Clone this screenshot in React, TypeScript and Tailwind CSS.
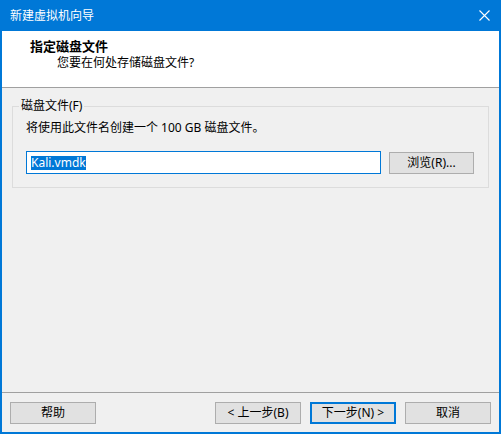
import React from "react";

const font = { fontFamily: '"Noto Sans", "Noto Sans CJK SC", sans-serif' };

function Btn({ children, primary, narrow }: { children: React.ReactNode; primary?: boolean; narrow?: boolean }) {
  const w = narrow ? "w-[85px]" : "w-[86px]";
  return (
    <button
      className={
        primary
          ? `${w} shrink-0 h-[22px] bg-[#e1e1e1] border-2 border-[#0078d7] text-[12px] leading-none text-black flex items-center justify-center`
          : `${w} shrink-0 h-[22px] bg-[#e1e1e1] border border-[#adadad] text-[12px] leading-none text-black flex items-center justify-center`
      }
    >
      {children}
    </button>
  );
}

export default function App() {
  return (
    <div
      className="w-[501px] h-[434px] flex flex-col bg-[#f0f0f0] border-x-2 border-b-2 border-[#0078d7] text-black"
      style={font}
    >
      <div className="h-[31px] bg-[#0078d7] flex items-center justify-between -mx-[2px] pl-[10px] pr-[11px]">
        <span className="text-white text-[12px] leading-none">新建虚拟机向导</span>
        <svg width="11" height="11" viewBox="0 0 11 11">
          <path d="M0.5 0.5 L10.5 10.5 M10.5 0.5 L0.5 10.5" stroke="#ffffff" strokeWidth="1.1" />
        </svg>
      </div>
      <div className="h-[57px] bg-white border-b border-[#a0a0a0] pt-[7px]">
        <div className="pl-[28px] text-[13px] font-bold leading-[17px]">指定磁盘文件</div>
        <div className="pl-[55px] text-[12px] leading-[16px]">您要在何处存储磁盘文件?</div>
      </div>
      <div className="flex-1 px-[10px] pt-[18px]">
        <div className="relative border border-[#dcdcdc] pt-[13px] pl-[13px] pr-[14px] pb-[13px]">
          <span className="absolute -top-[9px] left-[6px] px-[2px] bg-[#f0f0f0] text-[12px] leading-[16px]">
            磁盘文件(F)
          </span>
          <div className="text-[12px] leading-[16px]">将使用此文件名创建一个 100 GB 磁盘文件。</div>
          <div className="mt-[15px] flex items-center gap-[8px]">
            <div className="w-[355px] shrink-0 h-[23px] bg-white border border-[#0078d7] flex items-center pl-[4px]">
              <span className="bg-[#0078d7] text-white text-[12px] leading-[14px]">Kali.vmdk</span>
            </div>
            <Btn narrow>浏览(R)...</Btn>
          </div>
        </div>
      </div>
      <div className="border-t border-[#a0a0a0] pt-[9px] pb-[8px] pl-[8px] pr-[8px] flex items-center">
        <Btn>帮助</Btn>
        <div className="flex-1" />
        <div className="flex gap-[9px]">
          <Btn>&lt; 上一步(B)</Btn>
          <Btn primary>下一步(N) &gt;</Btn>
          <Btn>取消</Btn>
        </div>
      </div>
    </div>
  );
}
